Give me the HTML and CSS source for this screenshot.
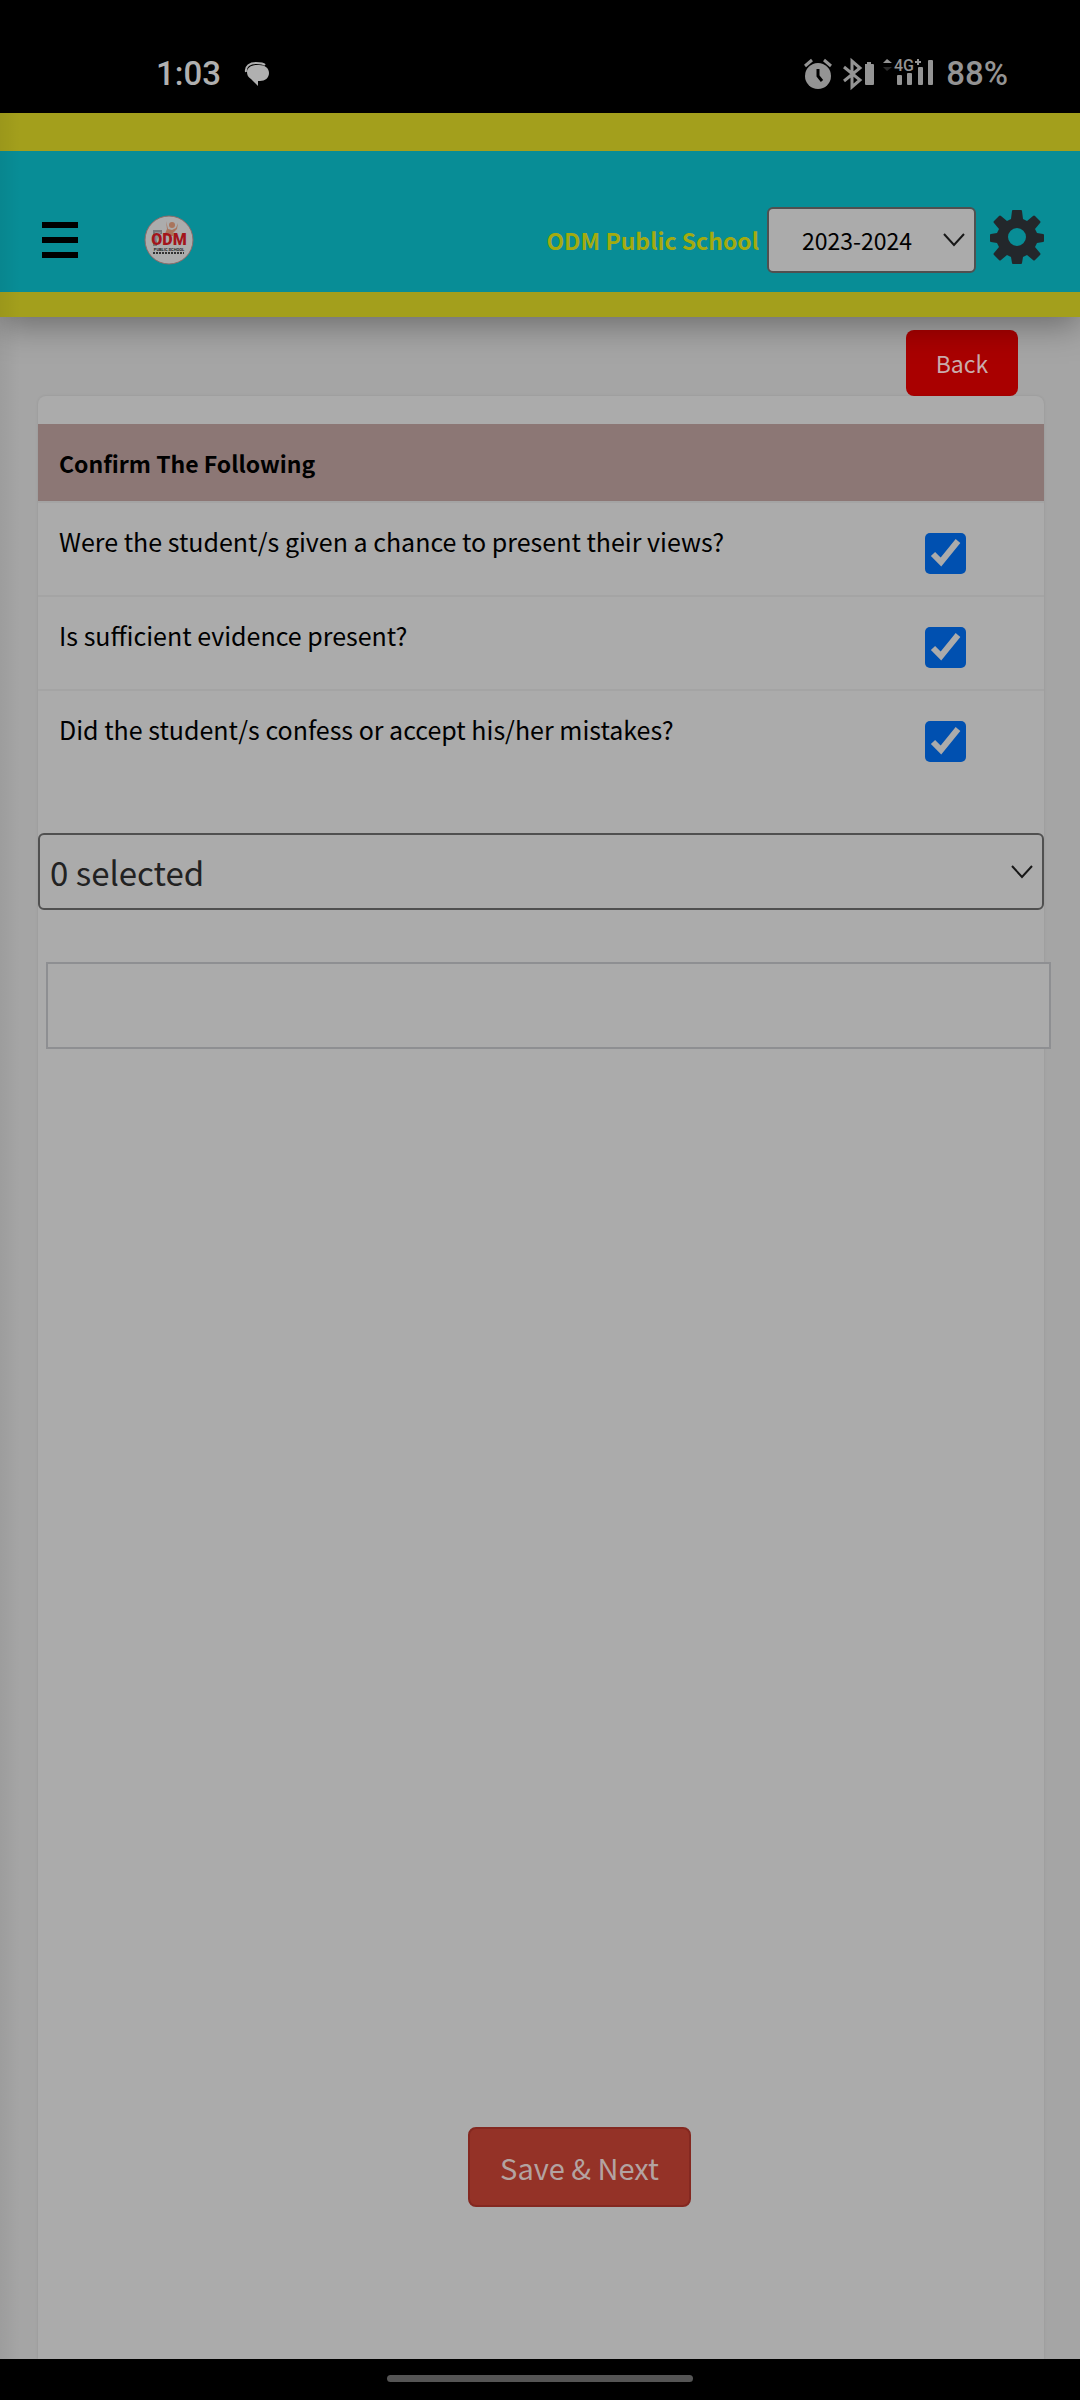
FILE: index.html
```html
<!DOCTYPE html>
<html lang="en">
<head>
  <meta charset="utf-8">
  <meta name="viewport" content="width=device-width, initial-scale=1">
  <title>ODM Public School</title>
  <link rel="stylesheet" href="styles.css">
</head>
<body>

  <div class="statusbar">
    <div class="status-left">
      <span class="clock">1:03</span>
      <svg class="chat-icon" width="24" height="24" viewBox="0 0 24 24">
        <path d="M1 10C0 4 5 1 11 1c4 0 7 0 9 2" fill="none" stroke="#b0b0b0" stroke-width="2"/>
        <path d="M12 3h2c6 0 10 3 10 8s-4 8-9 8h-2v5l-7-7c-3-2-4-4-4-7 0-4 4-7 10-7z" fill="#b0b0b0"/>
      </svg>
    </div>
    <div class="status-right">
      <svg width="134" height="32" viewBox="0 0 134 32" fill="#949494">
        <!-- alarm -->
        <circle cx="14" cy="18" r="13"/>
        <path d="M1 8l7-6M27 8l-7-6" stroke="#949494" stroke-width="3" fill="none"/>
        <path d="M14 11v7l4 5" stroke="#000" stroke-width="3" fill="none"/>
        <!-- bluetooth and its battery -->
        <path d="M40 9l16 13-8 7V3l8 7-16 13" stroke="#949494" stroke-width="3" fill="none"/>
        <path d="M61 6h2V4h4v2h2q1 0 1 1v19q0 1-1 1h-7q-1 0-1-1z"/>
        <!-- signal -->
        <path d="M79 5l4-4 5 4z"/>
        <path d="M79 9l4 4 5-4z" fill="#2a2a2a"/>
        <text x="90" y="13" class="network">4G</text>
        <path d="M111 4h6M114 1v6" stroke="#949494" stroke-width="2"/>
        <rect x="93" y="17" width="5" height="10" rx="1"/>
        <rect x="103" y="15" width="5" height="12" rx="1"/>
        <rect x="114" y="9" width="5" height="18" rx="1"/>
        <rect x="124" y="2" width="5" height="25" rx="1"/>
      </svg>
      <span class="battery">88%</span>
    </div>
  </div>

  <div class="app">
    <header class="header">
      <button class="menu-btn" aria-label="Menu">
        <span></span>
        <span></span>
        <span></span>
      </button>

      <a href="#" class="logo" aria-label="Home">
        <svg width="50" height="50" viewBox="0 0 50 50">
          <circle cx="25" cy="25" r="24" fill="#acacac" stroke="#8d6a68" stroke-width="1"/>
          <path d="M9 15h9v4h-5v12H9z" fill="#75777a"/>
          <path d="M11 17h6l-5 10z" fill="#8d9092"/>
          <circle cx="28" cy="10" r="3" fill="#a9745c"/>
          <path d="M22 6l2 8 4 1 4-2 2-5-1 6-4 4v3h-9l3-7z" fill="#a9745c"/>
          <text x="25" y="30" class="logo-name">ODM</text>
          <text x="25" y="36" class="logo-sub">PUBLIC SCHOOL</text>
          <path d="M9 38h31" stroke="#333" stroke-width="2" stroke-dasharray="2 1"/>
        </svg>
      </a>

      <span class="school">ODM Public School</span>

      <select class="year" aria-label="Academic year">
        <option>2023-2024</option>
      </select>

      <button class="settings-btn" aria-label="Settings">
        <svg width="54" height="54" viewBox="0 0 54 54">
          <path fill="#23272b" fill-rule="evenodd" d="M23 0h8q1 0 1 1l1 8 4 2 6-5q1-1 2 0l5 5q1 1 0 2l-5 6 2 4 6 1q1 0 1 1v6q0 1-1 1l-6 1-2 4 5 6q1 1 0 2l-5 5q-1 1-2 0l-6-5-4 2-1 6q0 1-1 1h-8q-1 0-1-1l-1-6-4-2-6 5q-1 1-2 0l-5-5q-1-1 0-2l5-6-2-4-6-1q-1 0-1-1v-6q0-1 1-1l6-1 2-4-5-6q-1-1 0-2l5-5q1-1 2 0l6 5 4-2 1-8q0-1 1-1zM27 18a9 9 0 1 0 0 18 9 9 0 0 0 0-18z"/>
        </svg>
      </button>
    </header>

    <main class="content">
      <div class="toolbar">
        <button class="back-btn">Back</button>
      </div>

      <form class="card">
        <table class="checks">
          <thead>
            <tr>
              <th colspan="2">Confirm The Following</th>
            </tr>
          </thead>
          <tbody>
            <tr>
              <td><label for="views">Were the student/s given a chance to present their views?</label></td>
              <td class="tick"><input type="checkbox" id="views" checked></td>
            </tr>
            <tr>
              <td><label for="evidence">Is sufficient evidence present?</label></td>
              <td class="tick"><input type="checkbox" id="evidence" checked></td>
            </tr>
            <tr>
              <td><label for="confess">Did the student/s confess or accept his/her mistakes?</label></td>
              <td class="tick"><input type="checkbox" id="confess" checked></td>
            </tr>
          </tbody>
        </table>

        <select class="picker" aria-label="Selected items">
          <option>0 selected</option>
        </select>

        <input type="text" class="remark" aria-label="Remark">

        <button type="button" class="save-btn">Save &amp; Next</button>
      </form>
    </main>
  </div>

  <div class="navbar">
    <div class="handle"></div>
  </div>

</body>
</html>
```
FILE: styles.css
```css
* {
  padding: 0;
  margin: 0;
  box-sizing: border-box;
}

body {
  min-height: 100vh;
  display: flex;
  flex-direction: column;
  background: #000;
  color: #000;
  font-family: "Noto Sans CJK SC", "Noto Sans", sans-serif;
  font-size: 23px;
}

button,
select,
input {
  font: inherit;
  outline: 0;
}

button {
  border: 0;
  background: none;
  cursor: pointer;
}

svg {
  display: block;
  overflow: visible;
}

/* phone status bar */
.statusbar {
  height: 113px;
  padding: 34px 72px 0 156px;
  display: flex;
  align-items: center;
  justify-content: space-between;
  font-family: Roboto, sans-serif;
  font-size: 33px;
  font-weight: 500;
}

.status-left {
  display: flex;
  align-items: center;
  gap: 24px;
  color: #b0b0b0;
}

.status-right {
  display: flex;
  align-items: center;
  gap: 8px;
  color: #949494;
}

.network {
  font-size: 16px;
  font-weight: 500;
}

/* app */
.app {
  flex: 1;
  display: flex;
  flex-direction: column;
  position: relative;
  background: #a5a5a5;
}

/* shade that the closed side menu throws on the left edge */
.app::before {
  content: "";
  position: absolute;
  top: 0;
  bottom: 0;
  left: 0;
  width: 20px;
  background: linear-gradient(to right, rgba(0, 0, 0, 0.05), rgba(0, 0, 0, 0));
  z-index: 2;
}

.header {
  display: flex;
  align-items: center;
  height: 204px;
  padding: 36px 36px 0 42px;
  background: #088d96;
  border-top: 38px solid #a39f1c;
  border-bottom: 25px solid #a39f1c;
  box-shadow: 0 8px 32px rgba(0, 0, 0, 0.35);
  z-index: 1;
}

.menu-btn {
  width: 36px;
  display: flex;
  flex-direction: column;
  gap: 9px;
}

.menu-btn span {
  height: 6px;
  background: #000;
}

.logo {
  margin: 0 auto 0 66px;
}

.logo-name {
  font: 900 16px Roboto, sans-serif;
  fill: #a3151c;
  text-anchor: middle;
}

.logo-sub {
  font: bold 4px Roboto, sans-serif;
  fill: #222;
  text-anchor: middle;
}

.school {
  color: #a3ab0f;
  font-weight: 700;
  margin-right: 8px;
}

.year,
.picker {
  appearance: none;
  border: 2px solid #505050;
  border-radius: 6px;
  background: #ababab url("data:image/svg+xml,%3Csvg xmlns='http://www.w3.org/2000/svg' width='22' height='14'%3E%3Cpath d='M1 1l10 11L21 1' fill='none' stroke='%23181818' stroke-width='2'/%3E%3C/svg%3E") no-repeat right 9px center;
}

.year {
  width: 209px;
  height: 66px;
  padding-left: 33px;
  color: #000;
}

.settings-btn {
  margin: 0 0 6px 14px;
}

.content {
  flex: 1;
  display: flex;
  flex-direction: column;
  padding: 13px 36px 0 38px;
}

.toolbar {
  display: flex;
  justify-content: flex-end;
  padding-right: 26px;
}

.back-btn {
  width: 112px;
  height: 66px;
  border-radius: 8px;
  background: #a90000;
  color: #c9acac;
}

.card {
  flex: 1;
  display: flex;
  flex-direction: column;
  padding-top: 28px;
  background: #ababab;
  border-radius: 8px 8px 0 0;
  box-shadow: 0 0 3px rgba(0, 0, 0, 0.1);
}

.checks {
  width: 100%;
  border-collapse: collapse;
}

.checks th {
  height: 78px;
  padding-left: 21px;
  text-align: left;
  background: #8c7775;
}

.checks td {
  height: 94px;
  padding: 20px 0 0 21px;
  border-top: 2px solid #a4a4a4;
  vertical-align: top;
  font-size: 25px;
  line-height: 36px;
}

.checks .tick {
  width: 179px;
  padding: 30px 0 0 22px;
}

.tick input {
  appearance: none;
  display: block;
  width: 41px;
  height: 41px;
  margin-left: 38px;
  border-radius: 5px;
}

.tick input:checked {
  background: #0050b0 url("data:image/svg+xml,%3Csvg xmlns='http://www.w3.org/2000/svg' viewBox='0 0 41 41'%3E%3Cpath d='M8 21l8 8L33 8' fill='none' stroke='%23ababab' stroke-width='6'/%3E%3C/svg%3E") center / 41px 41px;
}

.picker {
  width: 100%;
  height: 77px;
  margin-top: 49px;
  padding-left: 10px;
  color: #222;
  font-size: 33px;
}

.remark {
  height: 87px;
  margin: 52px -7px 0 8px;
  padding: 0 16px;
  border: 2px solid #8e8f92;
  background: #ababab;
}

.save-btn {
  width: 223px;
  height: 80px;
  margin: auto 353px 152px auto;
  border: 2px solid #842820;
  border-radius: 8px;
  background: #943227;
  color: #b3a3a1;
  font-size: 29px;
}

/* gesture bar */
.navbar {
  height: 41px;
  padding-top: 16px;
}

.handle {
  width: 306px;
  height: 7px;
  margin: 0 auto;
  border-radius: 4px;
  background: #555;
}
```
